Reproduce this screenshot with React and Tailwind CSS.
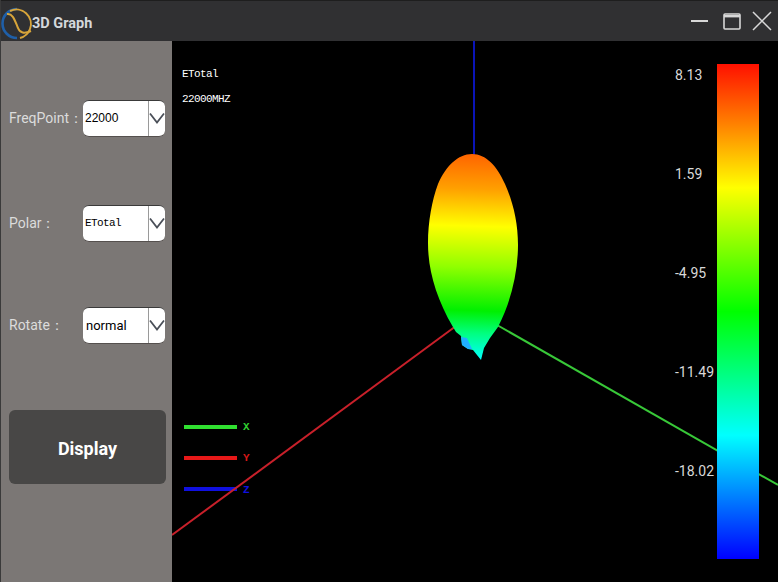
function Chevron() {
  return (
    <svg width="16" height="12" viewBox="0 0 16 12" fill="none" stroke="#4a4f58" strokeWidth="1.8">
      <path d="M1 1.5 L8 10.5 L15 1.5" />
    </svg>
  );
}

function Field({ label, value, valueClass }) {
  return (
    <div className="flex items-center h-[38px]">
      <div className="w-[82px] shrink-0 pl-[8px] text-[14px] text-[#dcdcdc] whitespace-nowrap font-['Roboto',sans-serif]">{label}</div>
      <div className="w-[82px] shrink-0 h-[37px] bg-white rounded-[6px] border-t border-b border-t-[#3a3a3a] border-b-[#55504e] flex items-center">
        <div className={"flex-1 pl-[2px] text-black " + valueClass}>{value}</div>
        <div className="w-[17px] h-full border-l border-[#9a9a9a] flex items-center justify-center"><Chevron /></div>
      </div>
    </div>
  );
}

function Logo() {
  return (
    <svg width="32" height="40" viewBox="0 0 32 40" fill="none" className="shrink-0">
      <path d="M16 8 A14.5 14.5 0 0 0 16 37" stroke="#1f5fa8" strokeWidth="2.6" />
      <path d="M9 10 A14.5 14.5 0 0 1 29 28 A14.5 14.5 0 0 1 19 37" stroke="#d8a53a" strokeWidth="2" />
      <path d="M6 13 C12 12 14 20 17 27 C19 32 23 33 30 30" stroke="#d8a53a" strokeWidth="2" />
    </svg>
  );
}

function Scene() {
  return (
    <svg width="606" height="541" viewBox="172 41 606 541" className="absolute left-0 top-0">
      <defs>
        <linearGradient id="lobe" gradientUnits="userSpaceOnUse" x1="476" y1="154" x2="470" y2="360">
          <stop offset="0" stopColor="#ff6400" />
          <stop offset="0.17" stopColor="#ffa000" />
          <stop offset="0.35" stopColor="#ffff00" />
          <stop offset="0.55" stopColor="#90ff00" />
          <stop offset="0.76" stopColor="#00f000" />
          <stop offset="0.87" stopColor="#00ff80" />
          <stop offset="1" stopColor="#00ffff" />
        </linearGradient>
      </defs>
      <line x1="474" y1="41" x2="474" y2="156" stroke="#0a14b8" strokeWidth="2" />
      <line x1="184" y1="427" x2="237" y2="427" stroke="#30e030" strokeWidth="4" />
      <line x1="184" y1="458" x2="237" y2="458" stroke="#e81818" strokeWidth="4" />
      <line x1="184" y1="489" x2="237" y2="489" stroke="#1010e0" strokeWidth="4" />
      <line x1="172" y1="535" x2="456" y2="326" stroke="#c8202a" strokeWidth="2" />
      <line x1="497" y1="325" x2="778" y2="485" stroke="#38c838" strokeWidth="2" />
      <path
        d="M472 154 C458 154 446 166 438 184 C432 200 428 222 428 243 C428 270 436 298 453 327 L456 332 L461 336 L462 345 L468 349 L473 350 L481 360 L484 348 L490 338 L498 327 C511 302 518 272 518 245 C518 222 513 202 505 184 C497 166 486 154 472 154 Z"
        fill="url(#lobe)"
      />
      <path d="M461 337 L467 338 L472 349 L468 349 L462 345 Z" fill="#20b0ff" />
    </svg>
  );
}

export default function App() {
  return (
    <div className="w-[780px] h-[584px] bg-white overflow-hidden">
      <div className="w-[778px] h-[582px] bg-[#2e2e30] border-l border-[#3a3a3a] flex flex-col">
        <div className="h-[41px] shrink-0 flex items-center bg-[#303032] border-t border-[#1e1e1e]">
          <Logo />
          <div className="text-[14.5px] font-bold text-[#d4d8dc] -ml-[1px] pt-[5px] font-['Roboto',sans-serif]">3D Graph</div>
          <div className="ml-auto flex items-center">
            <svg width="18" height="4" viewBox="0 0 18 4" className="mr-[14px]"><rect y="1" width="17" height="2" fill="#d8d8d8" /></svg>
            <svg width="18" height="17" viewBox="0 0 18 17" fill="none" className="mr-[11px]"><rect x="1" y="1" width="16" height="15" rx="1" stroke="#d8d8d8" strokeWidth="1.6" /><rect x="1" y="2" width="16" height="2.4" fill="#d8d8d8" /></svg>
            <svg width="20" height="20" viewBox="0 0 20 20" fill="none" className="mr-[6px]" stroke="#d8d8d8" strokeWidth="1.5"><path d="M1 1 L19 19 M19 1 L1 19" /></svg>
          </div>
        </div>
        <div className="flex-1 flex min-h-0">
          <aside className="w-[171px] shrink-0 bg-[#7b7775] flex flex-col pt-[58px]">
            <Field label="FreqPoint：" value="22000" valueClass="text-[12px] font-['Liberation_Sans',sans-serif]" />
            <div className="h-[67px]" />
            <Field label="Polar：" value="ETotal" valueClass="text-[11px] tracking-[-0.6px] font-['Liberation_Mono',monospace]" />
            <div className="h-[64px]" />
            <Field label="Rotate：" value="normal" valueClass="text-[13px] font-['Roboto',sans-serif] pl-[3px] pt-[2px]" />
            <button className="mt-[66px] ml-[8px] w-[157px] h-[74px] rounded-[6px] bg-[#484746] text-white text-[18px] font-bold pt-[3px] font-['Roboto',sans-serif]">Display</button>
          </aside>
          <main className="relative flex-1 bg-black">
            <Scene />
            <div className="absolute left-[10px] top-[27px] text-white text-[11px] tracking-[-0.6px] leading-[12px] font-['Liberation_Mono',monospace]">ETotal</div>
            <div className="absolute left-[10px] top-[52px] text-white text-[11px] tracking-[-0.6px] leading-[12px] font-['Liberation_Mono',monospace]">22000MHZ</div>
            <div className="absolute left-[71px] top-[380px] text-[#30d030] text-[11px] leading-[12px] font-bold font-['Liberation_Mono',monospace]">X</div>
            <div className="absolute left-[71px] top-[411px] text-[#d81818] text-[11px] leading-[12px] font-bold font-['Liberation_Mono',monospace]">Y</div>
            <div className="absolute left-[71px] top-[443px] text-[#1010e0] text-[11px] leading-[12px] font-bold font-['Liberation_Mono',monospace]">Z</div>
            <div className="absolute left-[503px] top-[25px] flex flex-col justify-between text-[14px] text-[#d8d8d8] leading-[18px] h-[414px] font-['Roboto',sans-serif]">
              <div>8.13</div>
              <div>1.59</div>
              <div>-4.95</div>
              <div>-11.49</div>
              <div>-18.02</div>
            </div>
            <div className="absolute left-[545px] top-[23px] w-[42px] h-[495px] bg-[linear-gradient(to_bottom,#ff1000_0%,#ff8000_12%,#ffff00_25%,#00ff00_50%,#00ffff_75%,#0000ff_100%)]" />
          </main>
        </div>
      </div>
    </div>
  );
}
